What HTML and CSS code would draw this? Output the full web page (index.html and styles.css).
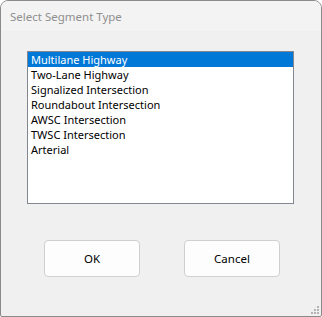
FILE: index.html
```html
<!DOCTYPE html>
<html lang="en">

<head>
    <meta charset="UTF-8">
    <meta name="viewport" content="width=device-width, initial-scale=1.0">
    <title>Select Segment Type</title>
    <link rel="stylesheet" href="styles.css">
</head>

<body>

    <div class="window">

        <div class="title-bar">
            <span class="title">Select Segment Type</span>
        </div>

        <div class="content">

            <ul class="segment-list">
                <li class="selected">Multilane Highway</li>
                <li>Two-Lane Highway</li>
                <li>Signalized Intersection</li>
                <li>Roundabout Intersection</li>
                <li>AWSC Intersection</li>
                <li>TWSC Intersection</li>
                <li>Arterial</li>
            </ul>

            <div class="buttons">
                <button class="dlg-button">OK</button>
                <button class="dlg-button">Cancel</button>
            </div>

        </div>

        <svg class="grip" width="10" height="10" viewBox="0 0 10 10">
            <rect x="7" y="1" width="2" height="2" fill="#b4b4b4" />
            <rect x="4" y="4" width="2" height="2" fill="#b4b4b4" />
            <rect x="7" y="4" width="2" height="2" fill="#b4b4b4" />
            <rect x="1" y="7" width="2" height="2" fill="#b4b4b4" />
            <rect x="4" y="7" width="2" height="2" fill="#b4b4b4" />
            <rect x="7" y="7" width="2" height="2" fill="#b4b4b4" />
        </svg>

    </div>

</body>

</html>
```

FILE: styles.css
```css
* {
    margin: 0;
    padding: 0;
    box-sizing: border-box;
}

body {
    background-color: #ffffff;
    font-family: "Noto Sans", "Open Sans", sans-serif;
    font-size: 11px;
}

.window {
    position: relative;
    width: 322px;
    height: 317px;
    border: 1px solid #8a8a8a;
    border-radius: 8px 8px 2px 2px;
    background-color: #f0f0f0;
    overflow: hidden;
}

.title-bar {
    height: 30px;
    background-color: #f3f3f3;
    display: flex;
    align-items: center;
    padding-left: 9px;
}

.title {
    color: #8f8f8f;
    font-size: 11.5px;
}

.content {
    padding: 20px 0 0 26px;
}

.segment-list {
    width: 267px;
    height: 153px;
    border: 1px solid #828790;
    background-color: white;
    list-style-type: none;
    padding: 0;
}

.segment-list li {
    height: 15px;
    line-height: 15px;
    padding-left: 3px;
    color: #000000;
    font-size: 11px;
    white-space: nowrap;
}

.segment-list li.selected {
    background-color: #0078d7;
    color: white;
}

.buttons {
    display: flex;
    gap: 44px;
    margin-top: 36px;
    padding-left: 17px;
}

.dlg-button {
    width: 96px;
    height: 37px;
    background-color: #fdfdfd;
    border: 1px solid #d0d0d0;
    border-radius: 4px;
    font-family: "Noto Sans", "Open Sans", sans-serif;
    font-size: 11.5px;
    color: #000000;
}

.grip {
    position: absolute;
    right: 1px;
    bottom: 1px;
}
```
